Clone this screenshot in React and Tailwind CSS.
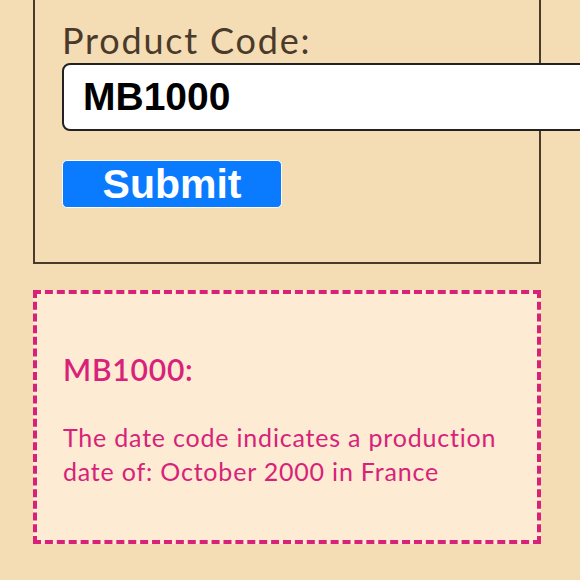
import React from 'react';

const App = () => {
  return (
    <div className="w-full h-[580px] overflow-hidden bg-[#f4dcb4]" style={{ fontFamily: 'Lato, "Noto Sans", sans-serif' }}>
      <div className="pl-[33px]">
        {/* Lookup form */}
        <div className="w-[508px] -mt-[20px] pt-[36px] pb-[54px] pl-[27px] border-2 border-[#4a3a2a]">
          <label className="block text-[36px] leading-[44px] tracking-[0.05em] text-[#4a3a2a]">Product Code:</label>
          <div className="mt-[1px] w-[560px] h-[68px] flex items-center pl-[19px] bg-white border-2 border-[#222] rounded-[8px]">
            <span className="text-[39px] font-bold text-black" style={{ fontFamily: '"Liberation Sans", Arial, sans-serif' }}>
              MB1000
            </span>
          </div>
          <button className="mt-[29px] w-[220px] h-[48px] flex items-center justify-center bg-[#0a7bff] border border-white rounded-[5px]">
            <span className="text-[41px] font-bold text-white leading-none" style={{ fontFamily: '"Liberation Sans", Arial, sans-serif' }}>
              Submit
            </span>
          </button>
        </div>

        {/* Result */}
        <div className="mt-[26px] w-[508px] pt-[57px] pb-[52px] pl-[26px] pr-[20px] bg-[#fdebd3] border-[4px] border-dashed border-[#d8227a] text-[#d8227a] tracking-[0.05em]">
          <h3 className="text-[30px] leading-[36px] font-semibold">MB1000:</h3>
          <p className="mt-[33px] text-[25px] leading-[34px]">
            The date code indicates a production date of: October 2000 in France
          </p>
        </div>

        <p className="mt-[31px] text-[25px] leading-[34px] text-[#4a3a2a] pl-[60px]">
          Look up the date of another bottle below
        </p>
      </div>
    </div>
  );
};

export default App;
